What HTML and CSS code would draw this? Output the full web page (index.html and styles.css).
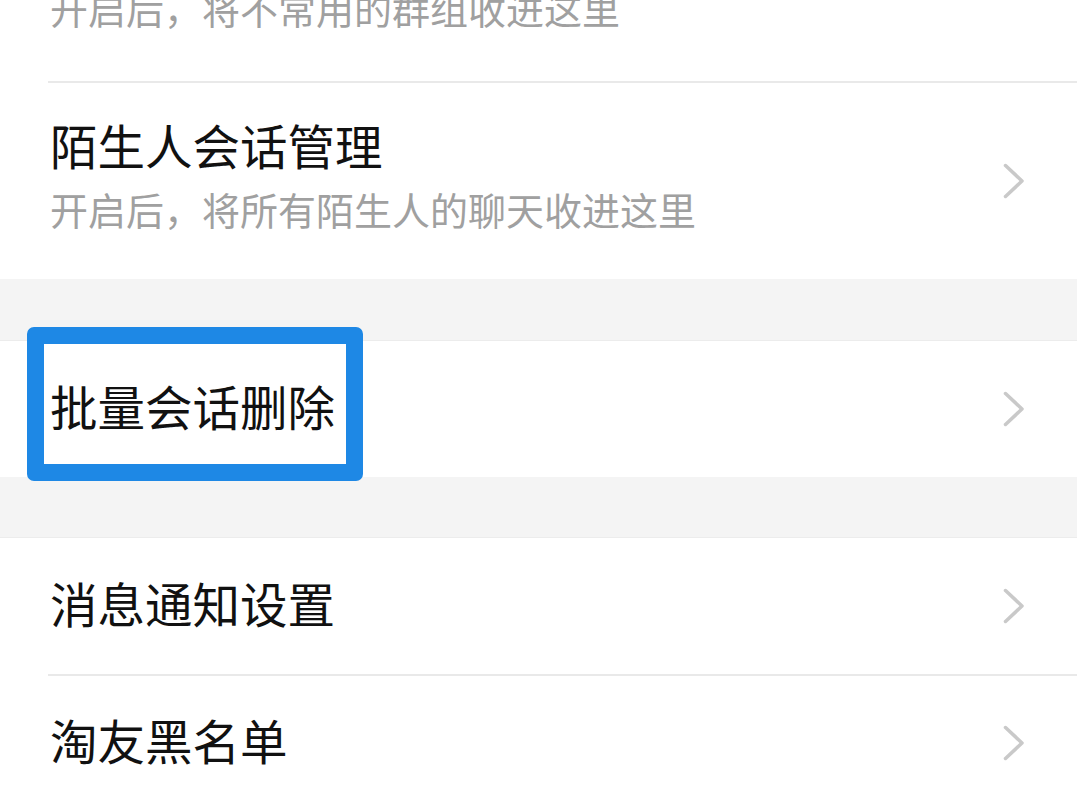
FILE: index.html
```html
<!DOCTYPE html>
<html lang="zh-CN">
<head>
<meta charset="utf-8">
<link rel="stylesheet" href="styles.css">
</head>
<body>
<div class="page">
  <div class="group first">
    <div class="row tall">
      <div class="texts">
        <div class="title">群组折叠</div>
        <div class="sub">开启后，将不常用的群组收进这里</div>
      </div>
    </div>
    <div class="row tall">
      <div class="texts">
        <div class="title">陌生人会话管理</div>
        <div class="sub">开启后，将所有陌生人的聊天收进这里</div>
      </div>
      <svg class="chev" viewBox="0 0 22 36"><path d="M2.5 2.5 L19 18 L2.5 33.5" /></svg>
    </div>
  </div>
  <div class="group">
    <div class="row single highlight-host">
      <div class="title">批量会话删除</div>
      <svg class="chev" viewBox="0 0 22 36"><path d="M2.5 2.5 L19 18 L2.5 33.5" /></svg>
      <div class="highlight"></div>
    </div>
  </div>
  <div class="group">
    <div class="row single">
      <div class="title">消息通知设置</div>
      <svg class="chev" viewBox="0 0 22 36"><path d="M2.5 2.5 L19 18 L2.5 33.5" /></svg>
    </div>
    <div class="row single">
      <div class="title">淘友黑名单</div>
      <svg class="chev" viewBox="0 0 22 36"><path d="M2.5 2.5 L19 18 L2.5 33.5" /></svg>
    </div>
  </div>
</div>
</body>
</html>
```
FILE: styles.css
```css
html, body {
  margin: 0;
  padding: 0;
  background: #f4f4f4;
  overflow: hidden;
}
body {
  font-family: "Noto Sans CJK SC", "Noto Sans", sans-serif;
  width: 1077px;
  height: 808px;
}
.page {
  display: flex;
  flex-direction: column;
  gap: 61px;
  margin-top: -118px;
}
.group {
  background: #fff;
  display: flex;
  flex-direction: column;
  border-top: 1px solid #ececec;
}
.group.first {
  border-top: none;
}
.group + .group + .group {
  margin-top: -1px;
}
.row {
  position: relative;
  display: flex;
  align-items: center;
  margin-left: 48px;
  padding-left: 2px;
  padding-right: 52px;
  box-sizing: border-box;
}
.row + .row {
  border-top: 2px solid #e9e9e9;
}
.row.tall {
  height: 199px;
  align-items: flex-start;
}
.row.tall + .row.tall {
  height: 198px;
}
.row.single {
  height: 136px;
}
.row.single .title {
  margin-bottom: 6px;
}
.texts {
  flex: 1;
  display: flex;
  flex-direction: column;
  padding-top: 34px;
  gap: 12px;
}
.title {
  flex: 1;
  font-size: 47.5px;
  line-height: 56px;
  color: #111;
}
.sub {
  font-size: 38px;
  line-height: 48px;
  color: #a0a0a0;
}
.chev {
  width: 22px;
  height: 36px;
  flex: none;
}
.row.tall .chev {
  align-self: center;
}
.chev path {
  fill: none;
  stroke: #c9c9c9;
  stroke-width: 3.5;
  stroke-linecap: round;
  stroke-linejoin: round;
}
.highlight {
  position: absolute;
  left: -21px;
  top: -14px;
  width: 336px;
  height: 154px;
  box-sizing: border-box;
  border: 17px solid #1e88e5;
  border-radius: 7px;
  pointer-events: none;
}
```
